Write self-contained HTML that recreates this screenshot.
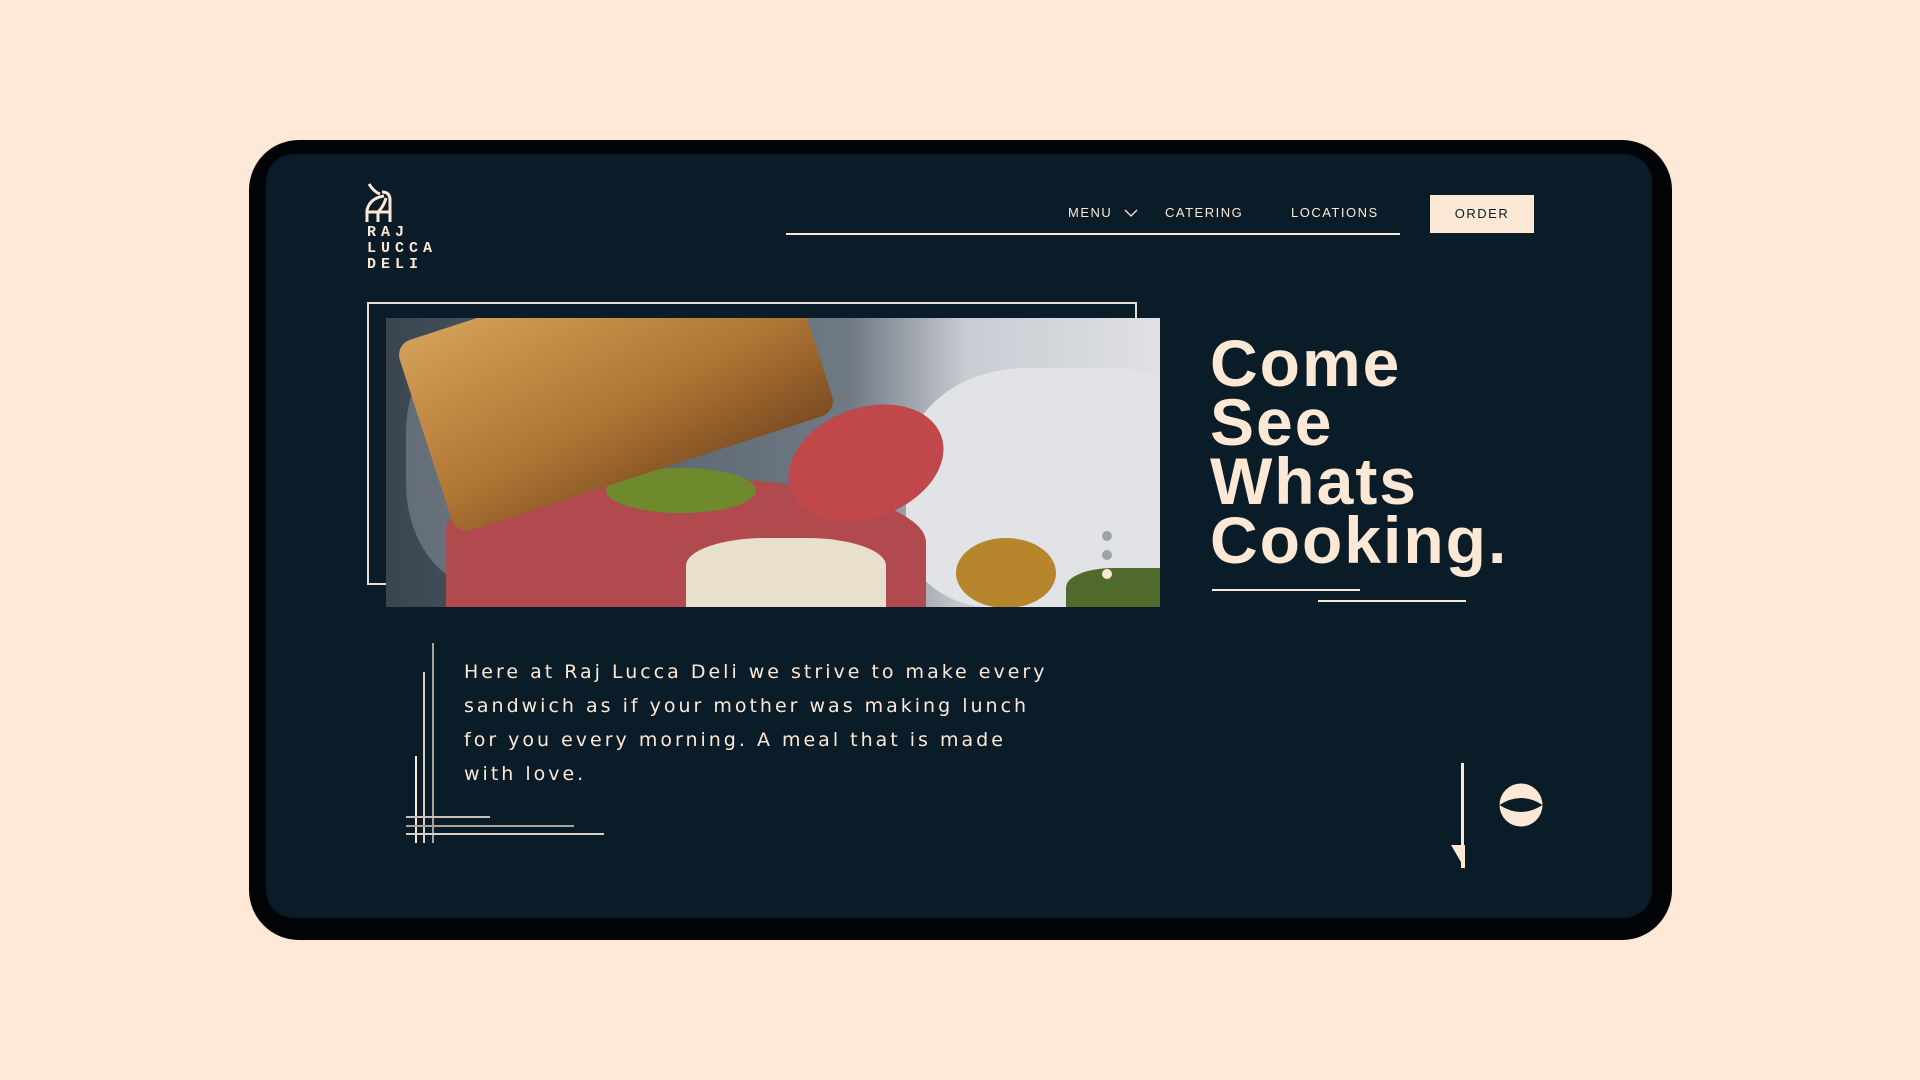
<!DOCTYPE html>
<html><head><meta charset="utf-8"><style>
*{margin:0;padding:0;box-sizing:border-box}
body{width:1920px;height:1080px;background:#fee8d7;position:relative;overflow:hidden;font-family:"Liberation Sans",sans-serif}
.dev{position:absolute;left:249px;top:140px;width:1423px;height:800px;background:#030405;border-radius:50px}
.scr{position:absolute;left:266px;top:154px;width:1386px;height:764px;background:#0a1c28;border-radius:28px;overflow:hidden}
.a{position:absolute}
.logo{left:367px;top:225px;font-family:"Liberation Mono",monospace;font-weight:bold;font-size:15px;letter-spacing:5px;line-height:16px;color:#fde8d6}
.nav{top:205px;font-size:13px;letter-spacing:1.5px;color:#fde8d6}
.photo{position:absolute;left:386px;top:318px;width:774px;height:289px;overflow:hidden;background:linear-gradient(90deg,#3a4450 0%,#5a6470 30%,#707a84 60%,#c9ccd2 75%,#dfe1e5 100%)}
h1{position:absolute;left:1210px;top:334px;font-family:"Liberation Sans",sans-serif;font-weight:bold;font-size:66px;line-height:59px;color:#fde8d6;letter-spacing:2px}
p.t{position:absolute;left:464px;top:655px;font-family:"DejaVu Sans",sans-serif;font-size:19px;line-height:34px;letter-spacing:3px;color:#fde8d6}
.l{position:absolute;background:#fde8d6}
</style></head><body>
<div class="dev"></div>
<div class="scr"></div>
<svg class="a" style="left:364px;top:182px" width="32" height="42" viewBox="0 0 32 42"><g fill="none" stroke="#fde8d6" stroke-width="3"><path d="M5 2 Q10 10 16 12"/><path d="M18 10 Q26 10 26 18 L26 40"/><path d="M3 40 L3 28 Q6 16 20 14"/><path d="M3 30 L26 30"/><path d="M14 40 L14 30 Q20 24 22 16"/></g></svg>
<div class="a logo">RAJ<br>LUCCA<br>DELI</div>
<div class="a nav" style="left:1068px">MENU</div>
<svg class="a" style="left:1124px;top:208px" width="14" height="10"><path d="M1 2 L7 8 L13 2" fill="none" stroke="#fde8d6" stroke-width="1.3"/></svg>
<div class="a nav" style="left:1165px">CATERING</div>
<div class="a nav" style="left:1291px">LOCATIONS</div>
<div class="l" style="left:786px;top:233px;width:614px;height:2px"></div>
<div class="a" style="left:1430px;top:195px;width:104px;height:38px;background:#fde8d6;color:#0a1c28;font-size:13px;letter-spacing:1.5px;text-align:center;line-height:38px">ORDER</div>
<div class="a" style="left:367px;top:302px;width:770px;height:283px;border:2px solid #e8dfd6"></div>
<div class="photo">
 <div class="a" style="left:520px;top:50px;width:300px;height:240px;background:#e2e3e7;border-radius:40% 30% 10% 30%"></div>
 <div class="a" style="left:20px;top:10px;width:200px;height:260px;background:#8c96a0;border-radius:40%;opacity:.5"></div>
 <div class="a" style="left:60px;top:160px;width:480px;height:129px;background:#b04a4e;border-radius:40% 50% 0 0"></div>
 <div class="a" style="left:300px;top:220px;width:200px;height:69px;background:#e8dfcc;border-radius:40% 40% 0 0"></div>
 <div class="a" style="left:400px;top:90px;width:160px;height:110px;background:#c0474a;border-radius:50%;transform:rotate(-20deg)"></div>
 <div class="a" style="left:220px;top:150px;width:150px;height:45px;background:#6e8a2c;border-radius:50%"></div>
 <div class="a" style="left:30px;top:-40px;width:400px;height:200px;background:linear-gradient(170deg,#d2a058,#b07634 60%,#7c4c22);border-radius:16px;transform:rotate(-18deg)"></div>
 <div class="a" style="left:570px;top:220px;width:100px;height:70px;background:#b7862c;border-radius:50%"></div>
 <div class="a" style="left:680px;top:250px;width:94px;height:39px;background:#4f6a2a;border-radius:50% 0 0 0"></div>
</div>
<div class="a" style="left:1102px;top:531px;width:10px;height:10px;border-radius:50%;background:#9aa4ae"></div>
<div class="a" style="left:1102px;top:550px;width:10px;height:10px;border-radius:50%;background:#9aa4ae"></div>
<div class="a" style="left:1102px;top:569px;width:10px;height:10px;border-radius:50%;background:#fde8d6"></div>
<h1>Come<br>See<br>Whats<br>Cooking.</h1>
<div class="l" style="left:1212px;top:589px;width:148px;height:2px"></div>
<div class="l" style="left:1318px;top:600px;width:148px;height:2px"></div>
<p class="t">Here at Raj Lucca Deli we strive to make every<br>sandwich as if your mother was making lunch<br>for you every morning. A meal that is made<br>with love.</p>
<div class="l" style="left:432px;top:643px;width:2px;height:200px;background:#a8a29c"></div>
<div class="l" style="left:423px;top:672px;width:2px;height:171px;background:#d8cfc6"></div>
<div class="l" style="left:415px;top:756px;width:2px;height:87px"></div>
<div class="l" style="left:406px;top:816px;width:84px;height:2px;background:#c8c0b8"></div>
<div class="l" style="left:406px;top:825px;width:168px;height:2px;background:#a8a29c"></div>
<div class="l" style="left:406px;top:833px;width:198px;height:2px;background:#d8cfc6"></div>
<div class="l" style="left:1461px;top:763px;width:3px;height:105px"></div>
<svg class="a" style="left:1450px;top:845px" width="16" height="25"><path d="M1 0 L15 0 L15 24 Z" fill="#fde8d6"/></svg>
<svg class="a" style="left:1499px;top:783px" width="44" height="44" viewBox="0 0 44 44"><circle cx="22" cy="22" r="21.5" fill="#fde8d6"/><path d="M0.5 22 Q22 8 43.5 22 Q22 36 0.5 22 Z" fill="#0a1c28"/></svg>
</body></html>
